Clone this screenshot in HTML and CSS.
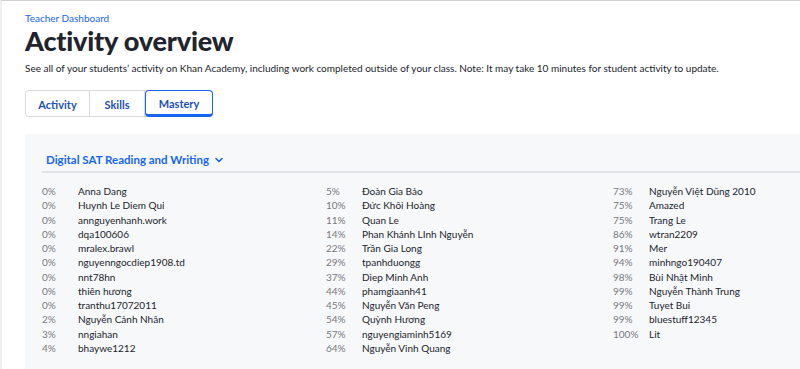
FILE: index.html
```html
<!DOCTYPE html>
<html>
<head>
<meta charset="utf-8">
<link rel="stylesheet" href="styles.css">
</head>
<body>
<div class="page">
  <header class="head">
    <a class="crumb">Teacher Dashboard</a>
    <h1 class="title">Activity overview</h1>
    <p class="desc">See all of your students’ activity on Khan Academy, including work completed outside of your class. Note: It may take 10 minutes for student activity to update.</p>
    <div class="tabs">
      <span class="tab">Activity</span>
      <span class="tab">Skills</span>
      <span class="tab active">Mastery</span>
    </div>
  </header>
  <section class="panel">
    <div class="panel-head">
      <span class="course">Digital SAT Reading and Writing</span>
      <svg class="chev" width="8" height="6" viewBox="0 0 8 6"><path d="M1 1.5 L4 4.5 L7 1.5" fill="none" stroke="#1865f2" stroke-width="1.6" stroke-linecap="round" stroke-linejoin="round"/></svg>
    </div>
    <div class="grid">
      <ul class="col">
        <li><span class="pct">0%</span><span class="name">Anna Dang</span></li>
        <li><span class="pct">0%</span><span class="name">Huynh Le Diem Qui</span></li>
        <li><span class="pct">0%</span><span class="name">annguyenhanh.work</span></li>
        <li><span class="pct">0%</span><span class="name">dqa100606</span></li>
        <li><span class="pct">0%</span><span class="name">mralex.brawl</span></li>
        <li><span class="pct">0%</span><span class="name">nguyenngocdiep1908.td</span></li>
        <li><span class="pct">0%</span><span class="name">nnt78hn</span></li>
        <li><span class="pct">0%</span><span class="name">thiên hương</span></li>
        <li><span class="pct">0%</span><span class="name">tranthu17072011</span></li>
        <li><span class="pct">2%</span><span class="name">Nguyễn Cảnh Nhân</span></li>
        <li><span class="pct">3%</span><span class="name">nngiahan</span></li>
        <li><span class="pct">4%</span><span class="name">bhaywe1212</span></li>
      </ul>
      <ul class="col">
        <li><span class="pct">5%</span><span class="name">Đoàn Gia Bảo</span></li>
        <li><span class="pct">10%</span><span class="name">Đức Khôi Hoàng</span></li>
        <li><span class="pct">11%</span><span class="name">Quan Le</span></li>
        <li><span class="pct">14%</span><span class="name">Phan Khánh LInh Nguyễn</span></li>
        <li><span class="pct">22%</span><span class="name">Trần Gia Long</span></li>
        <li><span class="pct">29%</span><span class="name">tpanhduongg</span></li>
        <li><span class="pct">37%</span><span class="name">Diep Minh Anh</span></li>
        <li><span class="pct">44%</span><span class="name">phamgiaanh41</span></li>
        <li><span class="pct">45%</span><span class="name">Nguyễn Văn Peng</span></li>
        <li><span class="pct">54%</span><span class="name">Quỳnh Hương</span></li>
        <li><span class="pct">57%</span><span class="name">nguyengiaminh5169</span></li>
        <li><span class="pct">64%</span><span class="name">Nguyễn Vinh Quang</span></li>
      </ul>
      <ul class="col">
        <li><span class="pct">73%</span><span class="name">Nguyễn Việt Dũng 2010</span></li>
        <li><span class="pct">75%</span><span class="name">Amazed</span></li>
        <li><span class="pct">75%</span><span class="name">Trang Le</span></li>
        <li><span class="pct">86%</span><span class="name">wtran2209</span></li>
        <li><span class="pct">91%</span><span class="name">Mer</span></li>
        <li><span class="pct">94%</span><span class="name">minhngo190407</span></li>
        <li><span class="pct">98%</span><span class="name">Bùi Nhật Minh</span></li>
        <li><span class="pct">99%</span><span class="name">Nguyễn Thành Trung</span></li>
        <li><span class="pct">99%</span><span class="name">Tuyet Bui</span></li>
        <li><span class="pct">99%</span><span class="name">bluestuff12345</span></li>
        <li><span class="pct">100%</span><span class="name">Lit</span></li>
      </ul>
    </div>
  </section>
</div>
</body>
</html>
```

FILE: styles.css
```css
* { box-sizing: border-box; }
html, body { margin: 0; padding: 0; }
body {
  font-family: Lato, "Noto Sans", sans-serif;
  color: #21242c;
  background: #fff;
  overflow: hidden;
  height: 369px;
}
.page {
  border-top: 1px solid #cfd0d2;
  border-left: 2px solid #eeeff1;
  height: 369px;
  padding-left: 23px;
  overflow: hidden;
}
.head { padding-top: 10px; }
.crumb {
  display: block;
  font-size: 10px;
  line-height: 14px;
  color: #1865f2;
}
.title {
  margin: 0;
  font-size: 27px;
  line-height: 32px;
  font-weight: 900;
  letter-spacing: -0.2px;
  color: #21242c;
}
.desc {
  margin: 4px 0 0;
  font-size: 10px;
  line-height: 14px;
}
.tabs {
  display: inline-flex;
  margin-top: 15px;
  border: 1px solid #dadbdd;
  border-radius: 4px;
  height: 27px;
}
.tab {
  display: flex;
  align-items: center;
  justify-content: center;
  padding-top: 1px;
  font-size: 11px;
  font-weight: 700;
  color: #1b50b3;
  border-right: 1px solid #dadbdd;
}
.tab:first-child { width: 64px; }
.tab:nth-child(2) { width: 55px; }
.tab.active {
  width: 68px;
  border: 1px solid #1865f2;
  border-bottom: 3px solid #1865f2;
  border-radius: 4px;
  margin: -1px -1px -1px 0;
}
.panel {
  margin-top: 17px;
  background: #f7f8fa;
  padding: 0 0 0 17px;
  height: 260px;
}
.panel-head {
  display: flex;
  align-items: center;
  gap: 6px;
  height: 39px;
  padding: 14px 0 0 4px;
  border-bottom: 2px solid #e2e3e6;
}
.course {
  font-size: 11.5px;
  font-weight: 700;
  color: #1865f2;
}
.chev { margin-top: 1px; }
.grid {
  display: grid;
  grid-template-columns: 284px 287px 1fr;
  padding-top: 11px;
}
.col { list-style: none; margin: 0; padding: 0; }
.col li {
  display: flex;
  font-size: 10px;
  line-height: 14.25px;
}
.pct { width: 36px; color: #77797e; }
.name { color: #21242c; }
```
